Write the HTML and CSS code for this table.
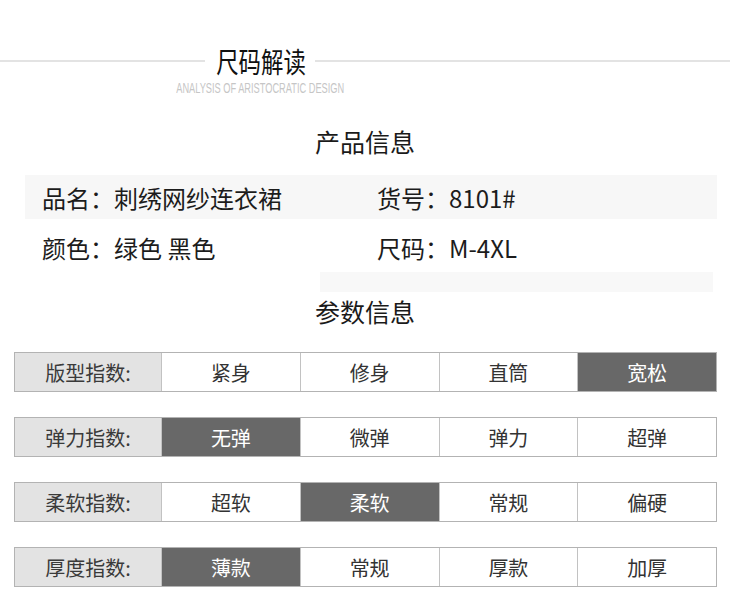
FILE: index.html
```html
<!DOCTYPE html>
<html lang="zh-CN">
<head>
<meta charset="utf-8">
<title>尺码解读</title>
<link rel="stylesheet" href="styles.css">
</head>
<body>
<div class="page">
  <header class="header">
    <div class="line"></div>
    <h1 class="title"><span>尺码解读</span></h1>
    <div class="line"></div>
    <div class="subtitle"><span>ANALYSIS OF ARISTOCRATIC DESIGN</span></div>
  </header>

  <h2 class="section-title first">产品信息</h2>
  <div class="info">
    <div class="info-row band">
      <div class="info-item">品名：刺绣网纱连衣裙</div>
      <div class="info-item">货号：8101#</div>
    </div>
    <div class="info-row">
      <div class="info-item">颜色：绿色 黑色</div>
      <div class="info-item">尺码：M-4XL</div>
    </div>
    <div class="info-strip"></div>
  </div>

  <h2 class="section-title second">参数信息</h2>
  <div class="params">
    <div class="param-row">
      <div class="cell label">版型指数:</div>
      <div class="cell">紧身</div>
      <div class="cell">修身</div>
      <div class="cell">直筒</div>
      <div class="cell on">宽松</div>
    </div>
    <div class="param-row">
      <div class="cell label">弹力指数:</div>
      <div class="cell on">无弹</div>
      <div class="cell">微弹</div>
      <div class="cell">弹力</div>
      <div class="cell">超弹</div>
    </div>
    <div class="param-row">
      <div class="cell label">柔软指数:</div>
      <div class="cell">超软</div>
      <div class="cell on">柔软</div>
      <div class="cell">常规</div>
      <div class="cell">偏硬</div>
    </div>
    <div class="param-row">
      <div class="cell label">厚度指数:</div>
      <div class="cell on">薄款</div>
      <div class="cell">常规</div>
      <div class="cell">厚款</div>
      <div class="cell">加厚</div>
    </div>
  </div>
</div>
</body>
</html>
```

FILE: styles.css
```css
* { box-sizing: border-box; }
html, body { margin: 0; padding: 0; background: #ffffff; }
body {
  font-family: "Noto Sans CJK SC", "Noto Sans", "Liberation Sans", sans-serif;
  color: #222222;
}
.page {
  width: 730px;
  height: 614px;
  overflow: hidden;
  padding-top: 46px;
}

/* Header */
.header {
  display: grid;
  grid-template-columns: 205px 110px 1fr;
  align-items: center;
}
.line {
  height: 2px;
  background: #e3e3e3;
}
.title {
  margin: 0;
  font-size: 28px;
  line-height: 30px;
  font-weight: 400;
  color: #111111;
  text-align: center;
  white-space: nowrap;
}
.title span {
  display: inline-block;
  transform: scaleX(0.8);
}
.subtitle {
  grid-column: 2;
  justify-self: center;
  white-space: nowrap;
  margin-top: 5px;
  font-family: "Liberation Sans", sans-serif;
  font-size: 14px;
  line-height: 14px;
  color: #c6c6c6;
}
.subtitle span {
  display: inline-block;
  transform: scaleX(0.66);
}

/* Section titles */
.section-title {
  margin: 0;
  text-align: center;
  font-size: 25px;
  line-height: 30px;
  font-weight: 400;
  color: #1a1a1a;
}
.section-title.first { margin-top: 31px; }
.section-title.second { margin-top: 4px; }

/* Product info */
.info {
  margin-top: 19px;
  padding: 0 13px 0 25px;
}
.info-row {
  display: grid;
  grid-template-columns: 335px 1fr;
  height: 44px;
  align-items: center;
  padding-left: 17px;
  font-size: 24px;
  color: #1c1c1c;
  white-space: nowrap;
}
.info-row + .info-row { margin-top: 6px; }
.info-row.band { background: #f7f7f7; }
.info-strip {
  margin: 3px 4px 0 295px;
  height: 20px;
  background: #f8f8f8;
}

/* Params table */
.params {
  margin: 26px 13px 0 14px;
  display: flex;
  flex-direction: column;
  gap: 25px;
}
.param-row {
  display: grid;
  grid-template-columns: 146px repeat(4, 1fr);
  height: 40px;
  border: 1px solid #b3b3b3;
}
.cell {
  display: flex;
  align-items: center;
  justify-content: center;
  font-size: 20px;
  color: #333333;
  background: #ffffff;
  border-left: 1px solid #c2c2c2;
}
.cell.label {
  border-left: none;
  background: #e3e3e3;
  color: #3a3a3a;
}
.cell.on {
  background: #686868;
  color: #ffffff;
}
```
